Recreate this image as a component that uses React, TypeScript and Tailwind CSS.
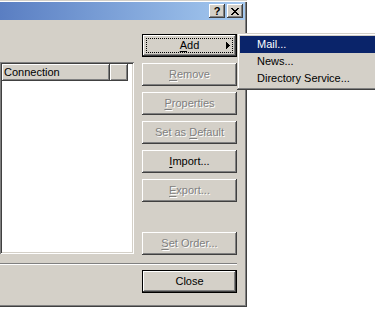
import type { ReactNode } from 'react';

const raised =
  'shadow-[inset_-1px_-1px_#404040,inset_1px_1px_#ffffff,inset_-2px_-2px_#808080,inset_2px_2px_#d4d0c8]';

function U({ children }: { children: ReactNode }) {
  return <span className="underline underline-offset-[2px]">{children}</span>;
}

function Btn({ children, disabled, def, focus, arrow, className = '' }: {
  children: ReactNode; disabled?: boolean; def?: boolean; focus?: boolean; arrow?: boolean; className?: string;
}) {
  return (
    <div className={`relative h-[23px] w-[95px] bg-[#d4d0c8] ${def ? 'border border-black' : ''} ${className}`}>
      <div className={`h-full w-full flex items-center justify-center ${raised} ${
        disabled ? 'text-[#808080] [text-shadow:1px_1px_0_#ffffff]' : 'text-black'
      }`}>
        <span className="whitespace-pre">{children}</span>
      </div>
      {focus && <div className="absolute inset-[3px] border border-dotted border-black" />}
      {arrow && (
        <svg className="absolute right-[6px] top-[7px]" width="4" height="7" viewBox="0 0 4 7">
          <polygon points="0,0 4,3.5 0,7" fill="#000" shapeRendering="crispEdges" />
        </svg>
      )}
    </div>
  );
}

function CapBtn({ children }: { children: ReactNode }) {
  return (
    <div className={`w-[16px] h-[14px] bg-[#d4d0c8] flex items-center justify-center text-[11px] font-bold leading-none text-black ${raised}`}>
      {children}
    </div>
  );
}

export default function App() {
  return (
    <div className="relative w-[375px] h-[309px] bg-white overflow-hidden text-[11px] leading-none [font-family:'Liberation_Sans',Arial,sans-serif]">
      {/* dialog window, cropped at the left */}
      <div className="w-[247px] h-[307px] flex flex-col bg-[#d4d0c8] border-t border-[#d4d0c8] shadow-[inset_0_1px_#ffffff,inset_-1px_-1px_#404040,inset_-2px_-2px_#808080]">
        <div className="mt-[1px] mr-[2px] h-[18px] flex items-center justify-end pr-[2px] gap-[2px] bg-gradient-to-r from-[#5a7ec2] to-[#a6caf0]">
          <CapBtn>?</CapBtn>
          <CapBtn>
            <svg width="8" height="7" viewBox="0 0 8 7" shapeRendering="crispEdges">
              <path d="M0 0h2v1h-2zM6 0h2v1h-2zM1 1h2v1h-2zM5 1h2v1h-2zM2 2h4v1h-4zM3 3h2v1h-2zM2 4h4v1h-4zM1 5h2v1h-2zM5 5h2v1h-2zM0 6h2v1h-2zM6 6h2v1h-2z" fill="#000" />
            </svg>
          </CapBtn>
        </div>

        <div className="flex-1 flex flex-col pt-[14px] pr-[10px]">
          <div className="flex">
            {/* list view */}
            <div className="mt-[28px] w-[134px] h-[192px] bg-white p-[2px] shadow-[inset_1px_1px_#808080,inset_-1px_-1px_#ffffff,inset_2px_2px_#404040,inset_-2px_-2px_#d4d0c8]">
              <div className="flex h-[17px]">
                <div className={`w-[108px] h-full bg-[#d4d0c8] flex items-center pl-[2px] pb-[1px] ${raised}`}>Connection</div>
                <div className={`w-[18px] h-full bg-[#d4d0c8] ${raised}`} />
              </div>
            </div>

            {/* buttons */}
            <div className="ml-[8px] flex flex-col gap-[6px]">
              <Btn def focus arrow><U>A</U>dd</Btn>
              <Btn disabled><U>R</U>emove</Btn>
              <Btn disabled><U>P</U>roperties</Btn>
              <Btn disabled>Set as <U>D</U>efault</Btn>
              <Btn><U>I</U>mport...</Btn>
              <Btn disabled><U>E</U>xport...</Btn>
              <Btn disabled className="mt-[24px]"><U>S</U>et Order...</Btn>
            </div>
          </div>

          <div className="mt-[8px] h-[2px] border-t border-[#808080] border-b border-b-white" />

          <div className="mt-[5px] flex justify-end">
            <Btn def>Close</Btn>
          </div>
        </div>
      </div>

      {/* submenu */}
      <div className="absolute left-[237px] top-[33px] w-[145px] p-[3px] bg-[#d4d0c8] shadow-[inset_-1px_-1px_#404040,inset_1px_1px_#d4d0c8,inset_-2px_-2px_#808080,inset_2px_2px_#ffffff]">
        <div className="h-[17px] flex items-center pl-[17px] bg-[#0a246a] text-white">Mail...</div>
        <div className="h-[17px] flex items-center pl-[17px] text-black">News...</div>
        <div className="h-[17px] flex items-center pl-[17px] text-black">Directory Service...</div>
      </div>
    </div>
  );
}
